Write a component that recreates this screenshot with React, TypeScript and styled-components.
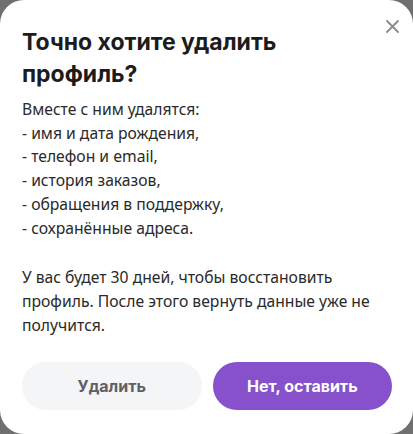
import React from "react";
import styled, { createGlobalStyle } from "styled-components";

const Global = createGlobalStyle`
  html, body { margin: 0; padding: 0; background: #6f6f6f; }
  body { width: 413px; height: 434px; overflow: hidden; }
  * { box-sizing: border-box; }
`;

const Modal = styled.div`
  position: relative;
  width: 413px;
  height: 434px;
  background: #ffffff;
  border-radius: 24px;
  padding: 26px 21px 24px 22px;
  display: flex;
  flex-direction: column;
  font-family: "Noto Sans", "Open Sans", sans-serif;
`;

const Close = styled.button`
  position: absolute;
  top: 18px;
  right: 13px;
  width: 16px;
  height: 16px;
  padding: 0;
  border: none;
  background: transparent;
  display: flex;
  align-items: center;
  justify-content: center;
  cursor: pointer;
`;

const Title = styled.h2`
  margin: 0 0 8px;
  font-family: "Inter", "Noto Sans", sans-serif;
  font-size: 23px;
  line-height: 32px;
  font-weight: 700;
  color: #1c1c1c;
  max-width: 300px;
`;

const Text = styled.p<{ $gap?: number }>`
  margin: ${(p) => p.$gap ?? 0}px 0 0;
  font-size: 15.7px;
  line-height: 23.7px;
  color: #2a2a2a;
`;

const Actions = styled.div`
  margin-top: auto;
  display: grid;
  grid-template-columns: 1fr 1fr;
  gap: 11px;
`;

const Button = styled.button<{ $primary?: boolean }>`
  height: 48px;
  border: none;
  border-radius: 24px;
  font-family: "Inter", "Noto Sans", sans-serif;
  font-size: 16px;
  font-weight: 700;
  background: ${(p) => (p.$primary ? "#8651cb" : "#f3f5f6")};
  color: ${(p) => (p.$primary ? "#ffffff" : "#5f5f64")};
  cursor: pointer;
`;

export default function App() {
  return (
    <>
      <Global />
      <Modal>
        <Close aria-label="Закрыть">
          <svg width="13" height="13" viewBox="0 0 13 13">
            <path d="M1 1L12 12M12 1L1 12" stroke="#8a8a8e" strokeWidth="1.8" strokeLinecap="round" />
          </svg>
        </Close>
        <Title>Точно хотите удалить профиль?</Title>
        <Text>
          Вместе с ним удалятся:
          <br />- имя и дата рождения,
          <br />- телефон и email,
          <br />- история заказов,
          <br />- обращения в поддержку,
          <br />- сохранённые адреса.
        </Text>
        <Text $gap={26}>
          У вас будет 30 дней, чтобы восстановить профиль. После этого вернуть данные уже не получится.
        </Text>
        <Actions>
          <Button>Удалить</Button>
          <Button $primary>Нет, оставить</Button>
        </Actions>
      </Modal>
    </>
  );
}
